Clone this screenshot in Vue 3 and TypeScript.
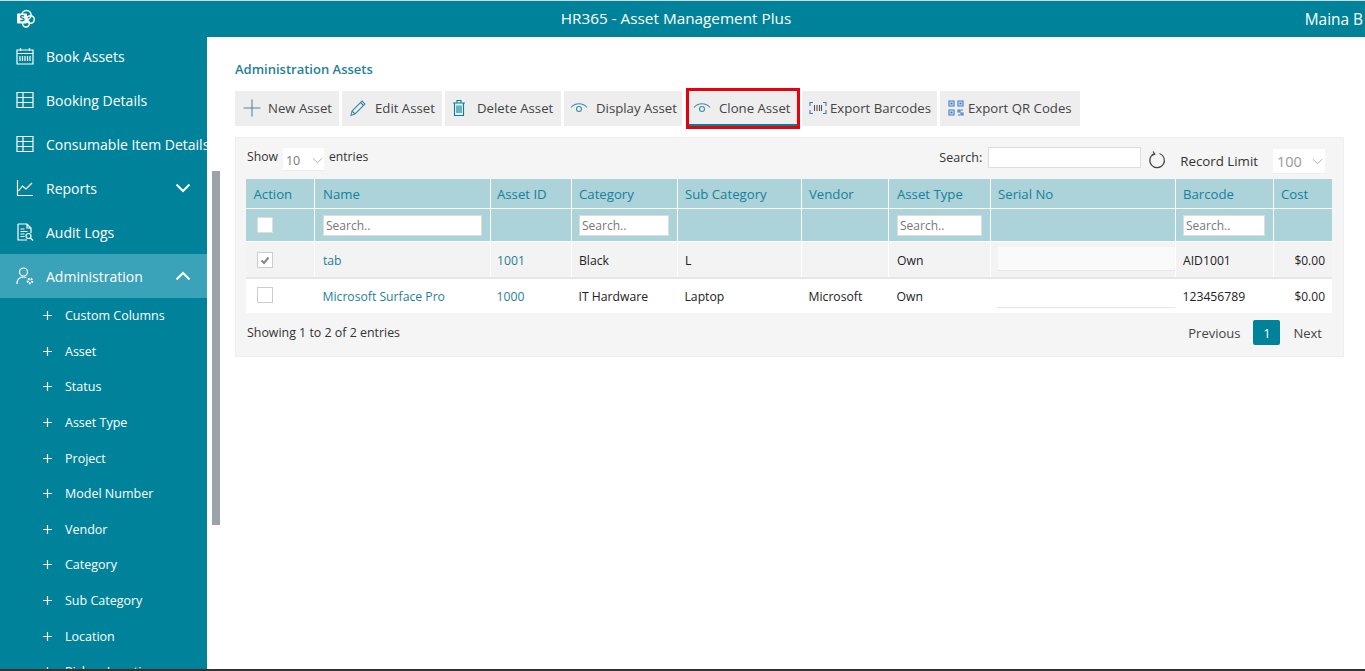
<template>
  <div class="app">
    <header class="topbar">
      <svg class="logo" viewBox="0 0 20 20" width="20" height="20">
        <circle cx="10.5" cy="6" r="4.6" fill="none" stroke="#fff" stroke-width="1.5" />
        <circle cx="14.5" cy="10.5" r="3.8" fill="none" stroke="#fff" stroke-width="1.5" />
        <circle cx="10" cy="14.5" r="3.4" fill="none" stroke="#fff" stroke-width="1.5" />
        <rect x="1" y="4.5" width="10" height="10" rx="1" fill="#fff" />
        <path d="M8.2 7.1c-1.6-.8-3.6-.5-3.6.8 0 1.500 3.500 1 3.500 2.600 0 1.400-2.300 1.500-3.800.8" fill="none" stroke="#00839a" stroke-width="1.300" />
      </svg>
      <div class="app-title">HR365 - Asset Management Plus</div>
      <div class="user">Maina B</div>
    </header>

    <div class="body">
      <aside class="sidebar">
        <nav class="nav">
          <a class="nav-item">
            <svg class="nav-icon" viewBox="0 0 18 18"><path d="M1 3h16v14H1zM1 6.500h16M4.500 1v3M13.500 1v3M4 9v5M6.500 9v5M9 9v5M11.500 9v5M14 9v5" /></svg>
            <span>Book Assets</span>
          </a>
          <a class="nav-item">
            <svg class="nav-icon" viewBox="0 0 18 18"><path d="M1 1.500h16v15H1zM1 6.500h16M1 11.500h16M7 1.500v15" /></svg>
            <span>Booking Details</span>
          </a>
          <a class="nav-item">
            <svg class="nav-icon" viewBox="0 0 18 18"><path d="M1 1.500h16v15H1zM1 6.500h16M1 11.500h16M7 1.500v15" /></svg>
            <span>Consumable Item Details</span>
          </a>
          <a class="nav-item">
            <svg class="nav-icon" viewBox="0 0 18 18"><path d="M1.500 1v15.500H17M2.500 12l4-5 3.500 3 6-6" /></svg>
            <span>Reports</span>
            <svg class="chev" viewBox="0 0 16 10"><path d="M1.500 1.500 8 8l6.500-6.500" /></svg>
          </a>
          <a class="nav-item">
            <svg class="nav-icon" viewBox="0 0 18 18"><path d="M2 1h9l4 4v5M2 1v16h9M11 1v4h4M4.500 6h4M4.500 8.500h7M4.500 11h4M4.500 13.500h4" /><circle cx="12.500" cy="13" r="2.500" /><path d="m14.500 15 2.500 2.500" /></svg>
            <span>Audit Logs</span>
          </a>
          <a class="nav-item active">
            <svg class="nav-icon" viewBox="0 0 18 18"><circle cx="7.500" cy="5" r="4" /><path d="M1 17c0-5 2.500-7 6.500-7 1 0 2 .2 2.800.5" /><circle cx="14" cy="14" r="2.200" stroke-width="2.200" stroke-dasharray="1.500 1" /></svg>
            <span>Administration</span>
            <svg class="chev" viewBox="0 0 16 10"><path d="M1.500 8.500 8 2l6.500 6.500" /></svg>
          </a>
          <a v-for="item in subItems" :key="item" class="sub-item">
            <svg class="plus" viewBox="0 0 9 9"><path d="M4.500 0v9M0 4.500h9" /></svg>
            <span>{{ item }}</span>
          </a>
        </nav>
      </aside>

      <div class="scrollbar"><div class="thumb"></div></div>

      <main class="content">
        <h1 class="page-title">Administration Assets</h1>

        <div class="toolbar">
          <button class="tool new">
            <svg class="tool-icon" viewBox="0 0 18 18"><path d="M9 .5v17M.5 9h17" stroke="#5b83a0" /></svg>
            New Asset
          </button>
          <button class="tool edit">
            <svg class="tool-icon" viewBox="0 0 18 18"><path d="M2 16.500l1-4.500L13 2l3 3L6 15zM3 12l3 3M11.500 3.500l3 3" stroke="#3f8aa5" /></svg>
            Edit Asset
          </button>
          <button class="tool del">
            <svg class="tool-icon" viewBox="0 0 18 18"><path d="M3 4h12M7 4V1.500h4V4M4.500 4v12.500h9V4M7 6.500v7.500M9 6.500v7.500M11 6.500v7.500" stroke="#00839a" /></svg>
            Delete Asset
          </button>
          <button class="tool display">
            <svg class="tool-icon" viewBox="0 0 18 18"><path d="M1 8.500C5 3.500 13 3.500 17 8.500" stroke="#3f8aa5" /><circle cx="9" cy="10" r="2.500" stroke="#3f8aa5" /></svg>
            Display Asset
          </button>
          <button class="tool clone">
            <svg class="tool-icon" viewBox="0 0 18 18"><path d="M1 8.500C5 3.500 13 3.500 17 8.500" stroke="#3f8aa5" /><circle cx="9" cy="10" r="2.500" stroke="#3f8aa5" /></svg>
            Clone Asset
          </button>
          <button class="tool barcodes">
            <svg class="tool-icon tight" viewBox="0 0 18 18"><path d="M1 7V3.500h3M14 3.500h3V7M1 11v3.500h3M14 14.500h3V11" stroke="#3a78c9" /><path d="M5.500 6v6M8 6v6M10.500 6v6M12.500 6v6" stroke="#555" /></svg>
            Export Barcodes
          </button>
          <button class="tool qr">
            <svg class="tool-icon tight" viewBox="0 0 18 18"><path d="M2 2h5v5H2zM11 2h5v5h-5zM2 11h5v5H2zM11 11h2v2h-2zM14 14h2v2h-2zM14 11h2M11 16h2" stroke="#3a78c9" /><path d="M4 4h1v1H4zM13 4h1v1h-1zM4 13h1v1H4z" stroke="#3a78c9" /></svg>
            Export QR Codes
          </button>
        </div>

        <section class="panel">
          <div class="panel-top">
            <div class="length">
              <span>Show</span>
              <div class="select small">
                <span>10</span>
                <svg class="select-chev" viewBox="0 0 12 7"><path d="M1 1l5 5 5-5" /></svg>
              </div>
              <span>entries</span>
            </div>
            <div class="search-box">
              <label>Search:</label>
              <input class="search-input" type="text" />
            </div>
            <svg class="refresh" viewBox="0 0 18 18" width="18" height="18"><path d="M6 2.800A7.300 7.300 0 1 0 11.500 2.500" /><path d="M5 .5l1.800 2.500L4 4.500" /></svg>
            <span class="limit-label">Record Limit</span>
            <div class="select limit">
              <span>100</span>
              <svg class="select-chev" viewBox="0 0 12 7"><path d="M1 1l5 5 5-5" /></svg>
            </div>
          </div>

          <table class="grid">
            <colgroup>
              <col v-for="c in columns" :key="c.label" :style="{ width: c.width + 'px' }" />
            </colgroup>
            <thead>
              <tr class="head-row">
                <th v-for="c in columns" :key="c.label">{{ c.label }}</th>
              </tr>
              <tr class="filter-row">
                <th v-for="c in columns" :key="c.label">
                  <span v-if="c.label === 'Action'" class="check plain"></span>
                  <input v-else-if="c.filter" class="filter" type="text" placeholder="Search.." />
                </th>
              </tr>
            </thead>
            <tbody>
              <tr v-for="row in rows" :key="row.id" :class="{ shaded: row.checked }">
                <td>
                  <span class="check">
                    <svg v-if="row.checked" viewBox="0 0 12 12" width="12" height="12"><path d="M2.500 6.500 5 9l4.500-5.500" /></svg>
                  </span>
                </td>
                <td class="link">{{ row.name }}</td>
                <td class="link">{{ row.id }}</td>
                <td>{{ row.category }}</td>
                <td>{{ row.sub }}</td>
                <td>{{ row.vendor }}</td>
                <td>{{ row.type }}</td>
                <td class="serial-cell"><div class="serial"></div></td>
                <td>{{ row.barcode }}</td>
                <td class="cost">$0.00</td>
              </tr>
            </tbody>
          </table>

          <div class="panel-bottom">
            <span class="info">Showing 1 to 2 of 2 entries</span>
            <div class="pager">
              <span class="page-link">Previous</span>
              <span class="page-num">1</span>
              <span class="page-link">Next</span>
            </div>
          </div>
        </section>
      </main>
    </div>
    <div class="taskbar"></div>
  </div>
</template>

<script setup lang="ts">
interface Column {
  label: string
  width: number
  filter?: boolean
}

const subItems = [
  'Custom Columns',
  'Asset',
  'Status',
  'Asset Type',
  'Project',
  'Model Number',
  'Vendor',
  'Category',
  'Sub Category',
  'Location',
  'Pickup Location'
]

const columns: Column[] = [
  { label: 'Action', width: 68 },
  { label: 'Name', width: 176, filter: true },
  { label: 'Asset ID', width: 81 },
  { label: 'Category', width: 106, filter: true },
  { label: 'Sub Category', width: 124 },
  { label: 'Vendor', width: 87 },
  { label: 'Asset Type', width: 102, filter: true },
  { label: 'Serial No', width: 185 },
  { label: 'Barcode', width: 98, filter: true },
  { label: 'Cost', width: 59 }
]

const rows = [
  { id: 1001, name: 'tab', category: 'Black', sub: 'L', vendor: '', type: 'Own', barcode: 'AID1001', checked: true },
  { id: 1000, name: 'Microsoft Surface Pro', category: 'IT Hardware', sub: 'Laptop', vendor: 'Microsoft', type: 'Own', barcode: '123456789', checked: false }
]
</script>

<style>
html,
body {
  margin: 0;
  overflow: hidden;
}
</style>

<style scoped>
.app {
  height: 671px;
  display: flex;
  flex-direction: column;
  position: relative;
  overflow: hidden;
  font-family: "Open Sans", "Noto Sans", sans-serif;
  font-size: 12.5px;
  color: #333;
  background: #fff;
}

.topbar {
  flex: none;
  height: 36px;
  border-top: 1px solid #d5d9da;
  background: #00839a;
  color: #fff;
  display: flex;
  align-items: center;
  position: relative;
}

.logo {
  margin-left: 16px;
}

.app-title {
  position: absolute;
  left: 0;
  right: 0;
  top: 7px;
  text-align: center;
  padding-right: 13px;
  font-size: 15.3px;
}

.user {
  margin-left: auto;
  margin-right: 2px;
  font-size: 15.4px;
}

.body {
  flex: 1;
  display: flex;
  min-height: 0;
}

.sidebar {
  flex: none;
  width: 207px;
  background: #00839a;
  overflow: hidden;
  color: #fff;
}

.nav {
  margin-top: -3px;
}

.nav-item {
  height: 44px;
  display: flex;
  align-items: center;
  padding-left: 16px;
  font-size: 14px;
  white-space: nowrap;
}

.nav-item.active {
  background: #3ba3b9;
}

.nav-icon {
  flex: none;
  width: 18px;
  height: 18px;
  margin-right: 12px;
  fill: none;
  stroke: #fff;
  stroke-width: 1.200;
}

.chev {
  width: 16px;
  height: 10px;
  margin-left: auto;
  margin-right: 16px;
  fill: none;
  stroke: #fff;
  stroke-width: 2;
}

.sub-item {
  height: 35.6px;
  display: flex;
  align-items: center;
  padding-left: 43px;
  font-size: 12.5px;
  white-space: nowrap;
}

.plus {
  flex: none;
  width: 9px;
  height: 9px;
  margin-right: 13px;
  fill: none;
  stroke: #fff;
  stroke-width: 1.200;
}

.scrollbar {
  flex: none;
  width: 28px;
  position: relative;
}

.thumb {
  position: absolute;
  left: 5px;
  top: 134px;
  width: 8px;
  height: 354px;
  background: #9aa2aa;
}

.content {
  flex: 1;
  min-width: 0;
  padding-top: 24px;
}

.page-title {
  margin: 0 0 13px;
  font-size: 13px;
  line-height: 17px;
  font-weight: 600;
  color: #1f7f9a;
}

.toolbar {
  display: flex;
  gap: 3px;
  height: 35px;
}

.tool {
  flex: none;
  height: 35px;
  border: none;
  padding: 0 0 2px 8px;
  background: #eeeeee;
  display: flex;
  align-items: center;
  font-family: inherit;
  font-size: 13.2px;
  color: #444;
  white-space: nowrap;
}

.tool-icon {
  flex: none;
  width: 18px;
  height: 18px;
  margin-right: 7px;
  fill: none;
  stroke-width: 1.100;
}

.tool-icon.tight {
  margin-right: 3px;
}

.new {
  width: 104px;
}

.edit {
  width: 100px;
  padding-left: 7px;
}

.edit .tool-icon {
  margin-right: 8px;
}

.del {
  width: 116px;
  padding-left: 5px;
}

.del .tool-icon {
  margin-right: 9px;
}

.display {
  width: 118px;
  padding-left: 6px;
}

.display .tool-icon {
  margin-right: 8px;
}

.barcodes {
  width: 135px;
  padding-left: 7px;
}

.qr {
  width: 140px;
  padding-left: 7px;
}

.clone {
  width: 108px;
  margin: 0 2px 0 4px;
  padding: 0 0 0 4px;
  border-bottom: 2px solid #00839a;
  outline: 3px solid #e8000d;
  outline-offset: 0;
}

.clone .tool-icon {
  margin-right: 8px;
}

.panel {
  margin: 11px 21px 0 0;
  height: 220px;
  box-sizing: border-box;
  background: #f5f5f5;
  border: 1px solid #eeeeee;
  padding: 0 11px 0 10px;
}

.panel-top {
  height: 41px;
  display: flex;
  align-items: flex-start;
}

.length {
  display: flex;
  align-items: flex-start;
  gap: 5px;
  padding: 10px 0 0 1px;
  font-size: 12.2px;
  line-height: 18px;
}

.select {
  background: #fff;
  display: flex;
  align-items: center;
  justify-content: space-between;
  border-bottom: 1px solid #eeeeee;
  color: #777;
  box-sizing: border-box;
}

.select.small {
  width: 41px;
  height: 23px;
  padding: 3px 1px 0 3px;
  font-size: 12.5px;
}

.select.limit {
  width: 52px;
  height: 25px;
  margin: 11px 7px 0 15px;
  padding: 0 2px 0 4px;
  font-size: 14.5px;
  color: #999;
}

.select-chev {
  width: 11px;
  height: 7px;
  fill: none;
  stroke: #aaa;
  stroke-width: 1;
}

.search-box {
  margin-left: auto;
  display: flex;
  align-items: center;
  gap: 6px;
  padding-top: 9px;
}

.search-input {
  width: 153px;
  height: 21px;
  box-sizing: border-box;
  border: 1px solid #dddddd;
  background: #fff;
  padding: 0;
}

.refresh {
  margin: 13px 14px 0 7px;
  fill: none;
  stroke: #444;
  stroke-width: 1.200;
}

.limit-label {
  margin-top: 14px;
  font-size: 13.3px;
}

.grid {
  table-layout: fixed;
  border-collapse: collapse;
  width: 1086px;
}

.grid th,
.grid td {
  padding: 0 7.5px;
  text-align: left;
  font-weight: 400;
  border: 1px solid #fff;
  white-space: nowrap;
  overflow: hidden;
}

.grid tr > :nth-child(2),
.grid tr > :nth-child(7) {
  padding-left: 8.5px;
}

.grid tr > :nth-child(3) {
  padding-left: 6.5px;
}

.grid tr > :first-child {
  border-left: none;
}

.grid tr > :last-child {
  border-right: none;
}

.head-row th {
  height: 29px;
  border-top: none;
  background: #acd2da;
  color: #16819b;
  font-size: 13.2px;
}

.filter-row th {
  height: 31px;
  padding-top: 1px;
  background: #acd2da;
}

.filter {
  display: block;
  width: 100%;
  height: 21px;
  box-sizing: border-box;
  border: 1px solid #dddddd;
  padding: 0 2px;
  font-family: inherit;
  font-size: 12px;
  background: #fff;
}

.filter::placeholder {
  color: #777;
  opacity: 1;
}

.check {
  display: block;
  width: 16px;
  height: 16px;
  margin-left: 3px;
  box-sizing: border-box;
  border: 1px solid #ccc;
  background: #fff;
  position: relative;
  top: -1px;
}

.check svg {
  display: block;
  margin: 1px;
  fill: none;
  stroke: #888;
  stroke-width: 2;
}

.check.plain {
  top: -1px;
  border-color: #ddd;
}

tbody td {
  height: 34px;
  background: #fff;
  color: #222;
  font-size: 12.2px;
}

tbody tr:first-child td {
  border-bottom: 2px solid #e6e6e6;
}

tbody tr:last-child td {
  border: none;
}

tbody tr.shaded td {
  height: 33px;
  padding-top: 2px;
  background: #f3f3f3;
}

td.link {
  color: #1f7f9a;
}

.grid td.cost {
  text-align: right;
  padding-right: 7px;
  font-size: 12px;
}

.grid td.serial-cell {
  padding: 0 0 0 7px;
  vertical-align: top;
}

.serial {
  height: 23px;
  margin-top: 5px;
  background: #fafafa;
  border-bottom: 1px solid #e6e6e6;
}

tbody tr:last-child .serial {
  background: #fff;
}

.panel-bottom {
  display: flex;
  align-items: flex-start;
  justify-content: space-between;
  padding: 11px 0 0;
}

.info {
  padding-left: 1px;
  font-size: 12.4px;
}

.pager {
  display: flex;
  align-items: center;
  margin-top: -4px;
  font-size: 13px;
}

.page-link {
  color: #444;
}

.page-num {
  width: 27px;
  height: 25px;
  margin: 0 13px;
  border-radius: 2px;
  background: #00839a;
  color: #fff;
  display: flex;
  align-items: center;
  justify-content: center;
}

.pager .page-link:last-child {
  margin-right: 10px;
}

.taskbar {
  position: absolute;
  left: 0;
  right: 0;
  bottom: 0;
  height: 2px;
  background: #333;
}
</style>
